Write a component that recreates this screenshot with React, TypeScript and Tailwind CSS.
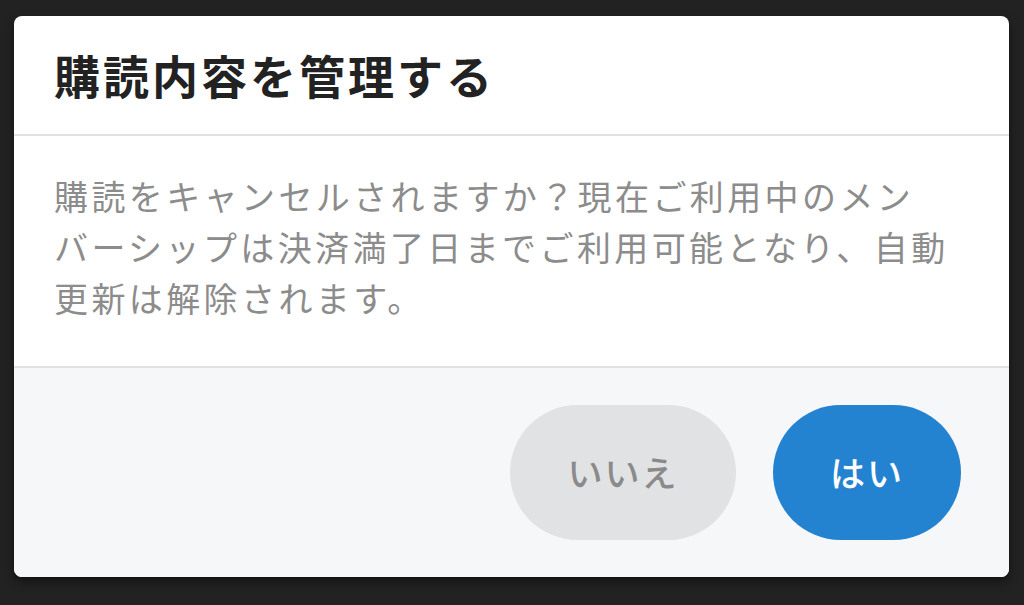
import React from 'react';

export default function App() {
  return (
    <div
      className="w-[1024px] h-[605px] bg-[#222222] pt-4 pl-[14px] pr-[15px]"
      style={{ fontFamily: '"Noto Sans CJK JP", "Noto Sans", sans-serif' }}
    >
      <div className="w-full bg-white rounded-lg overflow-hidden shadow-[0_4px_10px_rgba(0,0,0,0.5)]">
        <div className="px-10 pt-6 pb-[25px] border-b-2 border-[#e2e2e2]">
          <h1 className="text-[46px] leading-[69px] font-bold text-[#222222] tracking-[3px]">
            購読内容を管理する
          </h1>
        </div>
        <div className="px-10 pt-[34px] pb-[43px]">
          <p className="text-[34px] leading-[51px] tracking-[0.1em] text-[#8c8c8c] whitespace-nowrap">
            購読をキャンセルされますか？現在ご利用中のメン
            <br />
            バーシップは決済満了日までご利用可能となり、自動
            <br />
            更新は解除されます。
          </p>
        </div>
        <div className="bg-[#f6f7f9] border-t-2 border-[#e2e2e2] flex justify-end gap-[37px] pt-[37px] pb-[37px] pr-[48px]">
          <button className="w-[226px] h-[135px] rounded-full bg-[#e1e2e4] text-[#8a8a8a] text-[35px] font-medium tracking-[2px]">
            いいえ
          </button>
          <button className="w-[188px] h-[135px] rounded-full bg-[#2383d1] text-white text-[35px] font-medium tracking-[2px]">
            はい
          </button>
        </div>
      </div>
    </div>
  );
}
